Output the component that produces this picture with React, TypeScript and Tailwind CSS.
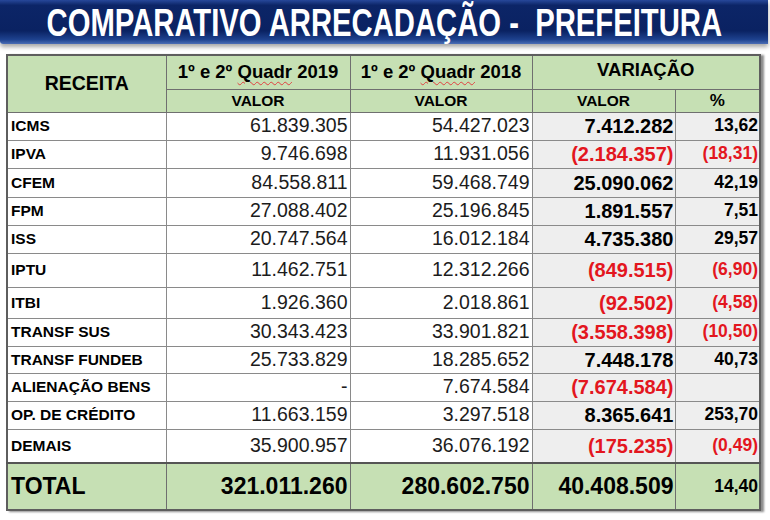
import React from "react";

type Row = {
  label: string;
  a: string;
  b: string;
  v: string;
  p: string;
  neg: boolean;
  h: string;
};

const rows: Row[] = [
  { label: "ICMS", a: "61.839.305", b: "54.427.023", v: "7.412.282", p: "13,62", neg: false, h: "h-[28px]" },
  { label: "IPVA", a: "9.746.698", b: "11.931.056", v: "(2.184.357)", p: "(18,31)", neg: true, h: "h-[28px]" },
  { label: "CFEM", a: "84.558.811", b: "59.468.749", v: "25.090.062", p: "42,19", neg: false, h: "h-[29px]" },
  { label: "FPM", a: "27.088.402", b: "25.196.845", v: "1.891.557", p: "7,51", neg: false, h: "h-[28px]" },
  { label: "ISS", a: "20.747.564", b: "16.012.184", v: "4.735.380", p: "29,57", neg: false, h: "h-[28px]" },
  { label: "IPTU", a: "11.462.751", b: "12.312.266", v: "(849.515)", p: "(6,90)", neg: true, h: "h-[34px]" },
  { label: "ITBI", a: "1.926.360", b: "2.018.861", v: "(92.502)", p: "(4,58)", neg: true, h: "h-[31px]" },
  { label: "TRANSF SUS", a: "30.343.423", b: "33.901.821", v: "(3.558.398)", p: "(10,50)", neg: true, h: "h-[28px]" },
  { label: "TRANSF FUNDEB", a: "25.733.829", b: "18.285.652", v: "7.448.178", p: "40,73", neg: false, h: "h-[27px]" },
  { label: "ALIENAÇÃO BENS", a: "-", b: "7.674.584", v: "(7.674.584)", p: "", neg: true, h: "h-[28px]" },
  { label: "OP. DE CRÉDITO", a: "11.663.159", b: "3.297.518", v: "8.365.641", p: "253,70", neg: false, h: "h-[28px]" },
  { label: "DEMAIS", a: "35.900.957", b: "36.076.192", v: "(175.235)", p: "(0,49)", neg: true, h: "h-[34px]" },
];

function Quadr({ year }: { year: string }) {
  return (
    <span>
      1º e 2º{" "}
      <span className="underline decoration-wavy decoration-[#e04040] decoration-1 underline-offset-[3px]">Quadr</span>{" "}
      {year}
    </span>
  );
}

export default function App() {
  return (
    <div
      className="w-[770px] h-[520px] bg-white overflow-hidden flex flex-col"
      style={{ fontFamily: '"Liberation Sans", Arial, sans-serif' }}
    >
      <div className="h-[44px] w-[768px] shrink-0 flex items-center justify-center bg-[linear-gradient(to_bottom,#27489a_0%,#0c2567_12%,#0a2262_70%,#1e428f_90%,#4b6db5_100%)] shadow-[0_3px_4px_rgba(0,0,0,0.35)] rounded-bl-[3px]">
        <span className="inline-block text-white font-bold text-[39px] leading-none whitespace-pre scale-x-[0.75] origin-center">
          COMPARATIVO ARRECADAÇÃO -  PREFEITURA
        </span>
      </div>

      <div className="mt-[10px] ml-[6px]">
        <table className="table-fixed border-collapse w-[753px] border-2 border-[#5e5e5e] shadow-[3px_1px_2px_rgba(0,0,0,0.45)] text-black leading-none">
          <colgroup>
            <col className="w-[159px]" />
            <col className="w-[184px]" />
            <col className="w-[182px]" />
            <col className="w-[143px]" />
            <col className="w-[85px]" />
          </colgroup>
          <thead>
            <tr className="h-[34px] bg-[#c6e0b4]">
              <th rowSpan={2} className="border border-[#6f6f6f] text-[19.5px] font-bold text-center align-middle p-0">
                RECEITA
              </th>
              <th className="border border-[#6f6f6f] text-[18.5px] font-bold text-center p-0">
                <Quadr year="2019" />
              </th>
              <th className="border border-[#6f6f6f] text-[18.5px] font-bold text-center p-0">
                <Quadr year="2018" />
              </th>
              <th colSpan={2} className="border border-[#6f6f6f] text-[18.5px] font-bold text-center p-0 pb-[5px]">
                VARIAÇÃO
              </th>
            </tr>
            <tr className="h-[23px] bg-[#c6e0b4]">
              <th className="border border-[#6f6f6f] text-[15.5px] font-bold text-center p-0">VALOR</th>
              <th className="border border-[#6f6f6f] text-[15.5px] font-bold text-center p-0">VALOR</th>
              <th className="border border-[#6f6f6f] text-[15.5px] font-bold text-center p-0">VALOR</th>
              <th className="border border-[#6f6f6f] text-[17px] font-bold text-center p-0">%</th>
            </tr>
          </thead>
          <tbody>
            {rows.map((r) => (
              <tr key={r.label} className={r.h}>
                <td className="border border-[#8a8a8a] bg-white text-[15.5px] font-bold pl-[3px] p-0 whitespace-nowrap">
                  {r.label}
                </td>
                <td className="border border-[#8a8a8a] bg-white text-[19.5px] text-right text-[#1c1c1c] pr-[2px] p-0">
                  {r.a}
                </td>
                <td className="border border-[#8a8a8a] bg-white text-[19.5px] text-right text-[#1c1c1c] pr-[2px] p-0">
                  {r.b}
                </td>
                <td
                  className={
                    "border border-[#8a8a8a] border-l-[#5e5e5e] bg-[#eeeeee] text-[20px] font-bold text-right pr-[1px] p-0 " +
                    (r.neg ? "text-[#e3161e]" : "text-black")
                  }
                >
                  {r.v}
                </td>
                <td
                  className={
                    "border border-[#8a8a8a] bg-[#eeeeee] text-[17.5px] font-bold text-right pr-[1px] p-0 " +
                    (r.neg ? "text-[#e3161e]" : "text-black")
                  }
                >
                  {r.p}
                </td>
              </tr>
            ))}
            <tr className="h-[47px] bg-[#c6e0b4]">
              <td className="border border-[#6f6f6f] border-t-2 border-t-[#555555] text-[23px] font-bold pl-[3px] p-0">TOTAL</td>
              <td className="border border-[#6f6f6f] border-t-2 border-t-[#555555] text-[23px] font-bold text-right pr-[2px] p-0">
                321.011.260
              </td>
              <td className="border border-[#6f6f6f] border-t-2 border-t-[#555555] text-[23px] font-bold text-right pr-[2px] p-0">
                280.602.750
              </td>
              <td className="border border-[#6f6f6f] border-t-2 border-t-[#555555] text-[23px] font-bold text-right pr-[1px] p-0">
                40.408.509
              </td>
              <td className="border border-[#6f6f6f] border-t-2 border-t-[#555555] text-[17.5px] font-bold text-right pr-[1px] p-0">
                14,40
              </td>
            </tr>
          </tbody>
        </table>
      </div>
    </div>
  );
}
